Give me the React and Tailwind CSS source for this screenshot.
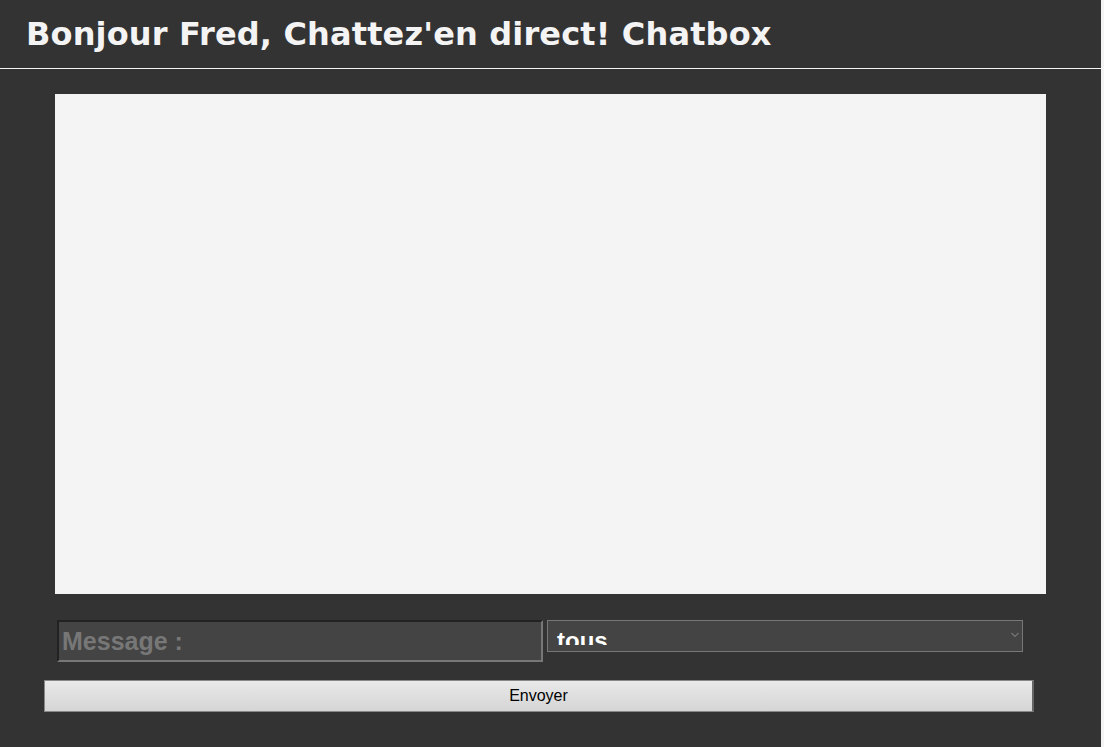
import React from 'react';

export default function App() {
  return (
    <div className="min-h-[747px] w-[1104px] bg-[#f4f4f4]">
      <div className="w-[1101px] min-h-[747px] bg-[#333333]">
        <header className="h-[69px] border-b border-[#f4f4f4] pl-[26px] pt-[14px]">
          <h1 className="text-[32px] leading-[40px] font-bold text-[#f4f4f4] font-['DejaVu_Sans',Verdana,sans-serif] tracking-[0.15px]">
            Bonjour Fred, Chattez'en direct! Chatbox
          </h1>
        </header>

        <div className="ml-[55px] mt-[25px] w-[991px] h-[500px] bg-[#f4f4f4]"></div>

        <form className="mt-[26px]" onSubmit={e => e.preventDefault()}>
          <div className="flex items-start ml-[57px]">
            <input
              type="text"
              placeholder="Message :"
              className="w-[486px] h-[42px] bg-[#444444] border-2 border-t-[#222222] border-l-[#222222] border-b-[#777777] border-r-[#777777] px-[3px] text-[25px] font-bold text-white placeholder:text-[#777777] font-['Liberation_Sans',Arial,sans-serif] outline-none"
            />
            <div className="relative ml-[4px] w-[476px] h-[32px] bg-[#444444] border border-[#777777]">
              <div className="absolute left-0 right-0 top-0 h-[24px] overflow-hidden">
                <span className="absolute left-[9px] top-[5px] text-[24px] leading-[30px] font-bold text-white font-['Liberation_Sans',Arial,sans-serif]">tous</span>
              </div>
              <svg className="absolute right-[3px] top-[11px]" width="8" height="6" viewBox="0 0 8 6" fill="none">
                <path d="M0.5 1 L4 4.5 L7.5 1" stroke="#777777" strokeWidth="1.2" />
              </svg>
            </div>
          </div>
          <button
            type="submit"
            className="block ml-[44px] mt-[18px] w-[990px] h-[32px] bg-linear-to-b from-[#e9e9e9] to-[#d5d5d5] border border-[#888888] border-r-2 border-r-[#666666] text-[16px] text-black font-['Liberation_Sans',Arial,sans-serif]"
          >
            Envoyer
          </button>
        </form>
      </div>
    </div>
  );
}
